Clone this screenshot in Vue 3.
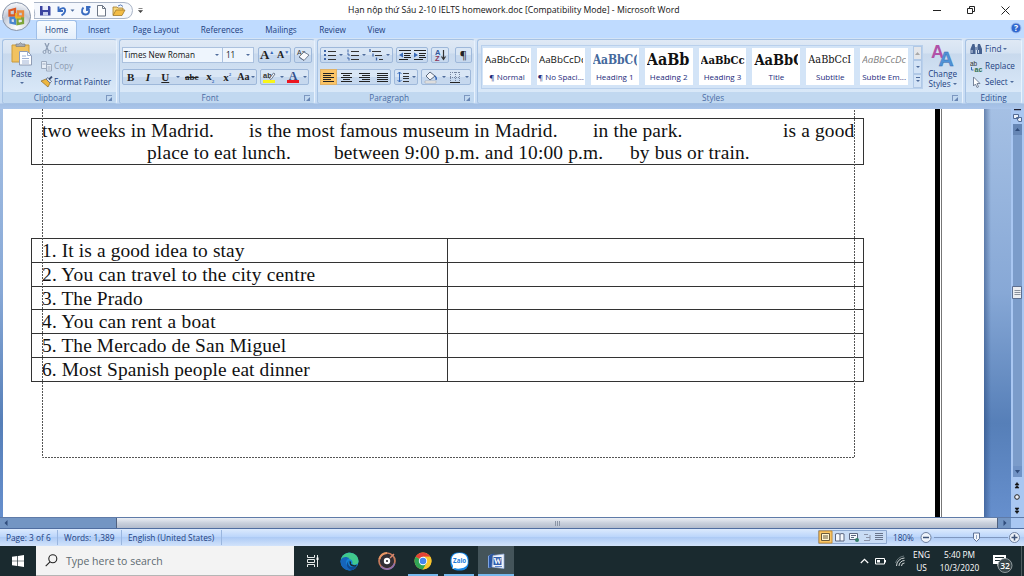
<script setup>
import { ref } from 'vue';

const tabs = ['Home', 'Insert', 'Page Layout', 'References', 'Mailings', 'Review', 'View'];
const activeTab = ref('Home');

const styles = [
  { sample: 'AaBbCcDc', name: '¶ Normal', cls: 'sans' },
  { sample: 'AaBbCcDc', name: '¶ No Spaci...', cls: 'sans' },
  { sample: 'AaBbC(', name: 'Heading 1', cls: 'h1' },
  { sample: 'AaBb', name: 'Heading 2', cls: 'h2' },
  { sample: 'AaBbCc', name: 'Heading 3', cls: 'h3' },
  { sample: 'AaBbC', name: 'Title', cls: 'title' },
  { sample: 'AaBbCcI', name: 'Subtitle', cls: 'subtitle' },
  { sample: 'AaBbCcDc', name: 'Subtle Em...', cls: 'subtle' }
];

const questions = [
  '1. It is a good idea to stay',
  '2. You can travel to the city centre',
  '3. The Prado',
  '4. You can rent a boat',
  '5. The Mercado de San Miguel',
  '6. Most Spanish people eat dinner'
];

// line bars for the alignment buttons, as [x, y, width]
const aligns = {
  left: [[2, 2, 11], [2, 4, 8], [2, 6, 11], [2, 8, 8], [2, 10, 11]],
  center: [[2, 2, 11], [4, 4, 7], [2, 6, 11], [4, 8, 7], [2, 10, 11]],
  right: [[2, 2, 11], [5, 4, 8], [2, 6, 11], [5, 8, 8], [2, 10, 11]],
  justify: [[2, 2, 11], [2, 4, 11], [2, 6, 11], [2, 8, 11], [2, 10, 11]]
};
</script>

<template>
  <div class="window">
    <header class="titlebar">
      <div class="qat">
        <svg width="116" height="19" viewBox="34 0 116 19">
          <path d="M31 1.500H124Q132 2 132.500 9.500Q132 17.500 124 17.500H34Q37 8 28 1.500" fill="#f5f8fd" stroke="#a9b4c6" />
          <path d="M40 5h9.500l1 1v8.500H40z" fill="#3b44a0" />
          <path d="M42.500 5h5.500v4h-5.500z" fill="#e8ecfa" />
          <path d="M43 11h5v3.500h-5z" fill="#c7d0ee" />
          <path d="M58.500 5.500v4.500h4.500M59 9.500c3-4 7-2.500 6 1c-.5 2-2 3-3.500 3.800" fill="none" stroke="#3a6cc0" stroke-width="1.900" />
          <path d="M70.500 8.500h4l-2 2.200z" fill="#4a6a9c" />
          <path d="M83.500 6.500c-3 3-1.500 7 1.800 7c4 0 5-4.500 2.500-7M87 10V6h3.500" fill="none" stroke="#3a6cc0" stroke-width="1.900" />
          <path d="M97.500 4.500h5l3 3v7.500h-8z" fill="#fff" stroke="#6d7786" />
          <path d="M102.500 4.500v3h3" fill="none" stroke="#6d7786" />
          <path d="M113 14V6h4l1 1h5v3" fill="#f7d77c" stroke="#a17a2b" stroke-width=".8" />
          <path d="M113 14.500l3-5.500h9l-3 5.500z" fill="#f3bc45" stroke="#a17a2b" stroke-width=".8" />
          <path d="M118 5q3-2.500 5 .5" fill="none" stroke="#5d7fb8" />
          <path d="M138.500 7.500h4M138.500 9.500h4l-2 2.200z" fill="#444" stroke="#555" stroke-width=".7" />
        </svg>
      </div>
      <div class="caption">Hạn nộp thứ Sáu 2-10 IELTS homework.doc [Compatibility Mode] - Microsoft Word</div>
      <svg class="controls" width="90" height="19" viewBox="0 0 90 19">
        <path d="M0 9.500h8" stroke="#222" />
        <path d="M34.500 7.500h5v5h-5zM36.500 7v-1.500h5v5h-1.500" fill="none" stroke="#222" />
        <path d="M68.500 5.500l8 8M76.500 5.500l-8 8" stroke="#222" />
      </svg>
    </header>

    <nav class="tabs">
      <button v-for="t in tabs" :key="t" :class="['tab', t.toLowerCase().replace(' ', '-'), { active: t === activeTab }]" @click="activeTab = t">{{ t }}</button>
      <svg class="help" width="12" height="12" viewBox="0 0 12 12">
        <circle cx="6" cy="6" r="5" fill="#2f67cf" stroke="#a5c0ee" />
        <text x="6" y="9" text-anchor="middle" font-family="Open Sans, sans-serif" font-size="8.500" font-weight="700" fill="#fff">?</text>
      </svg>
    </nav>

    <!-- office button sits over title bar and tabs -->
    <svg class="orb" width="32" height="32" viewBox="0 0 32 32">
      <defs>
        <radialGradient id="orb" cx=".5" cy=".9" r=".9">
          <stop offset="0" stop-color="#fff" />
          <stop offset=".45" stop-color="#d6dbe5" />
          <stop offset=".6" stop-color="#bfc7d5" />
          <stop offset="1" stop-color="#fbfcfe" />
        </radialGradient>
      </defs>
      <circle cx="16.500" cy="16.500" r="14" fill="url(#orb)" stroke="#8793a8" />
      <g fill="none" stroke-width="2.300">
        <path d="M9.500 10.500l5.500-1.500v6.500h-5.500z" stroke="#dc5a24" />
        <path d="M18 11.500h5v5h-5z" stroke="#e98a3a" />
        <path d="M17.500 18.500h5.500v4.500l-5.500 1z" stroke="#7da53a" />
        <path d="M10.500 18h4.500v5.500l-4.500-1z" stroke="#4a86ce" />
      </g>
      <path d="M16 13v4.500h5" fill="none" stroke="#f0b428" stroke-width="1.800" />
    </svg>

    <section class="ribbon">
      <div class="group clipboard">
        <div class="body">
          <div class="paste">
            <svg width="22" height="24" viewBox="0 0 22 24">
              <path d="M1 3h17v17H1z" fill="#f1c25f" stroke="#c99a3c" />
              <path d="M5 4.500V2h3l1.500-1.500L11 2h3v2.500z" fill="#a7acb5" stroke="#777" stroke-width=".6" />
              <path d="M8.500 9.500h8l4 4v9.500h-12z" fill="#fdfeff" stroke="#8f9cb4" />
              <path d="M16.500 9.500v4h4M11 14h4M11 16.500h7M11 19h7M11 21h7" stroke="#9fb2d4" fill="none" />
            </svg>
            <span>Paste</span>
            <i class="caret"></i>
          </div>
          <div class="clip-list">
            <div class="off">
              <svg width="14" height="12" viewBox="0 0 14 12"><path d="M5 0l3.500 8M9 0L5.500 8" stroke="#8d9db4" stroke-width="1.300" /><circle cx="4.500" cy="9" r="1.500" fill="none" stroke="#8d9db4" /><circle cx="9.500" cy="9" r="1.500" fill="none" stroke="#8d9db4" /></svg>Cut
            </div>
            <div class="off">
              <svg width="14" height="12" viewBox="0 0 14 12"><path d="M1.500 1.500h5v7h-5zM6.500 4.500h5v6.500h-5z" fill="#e6edf6" stroke="#9dabbf" /><path d="M7.500 7h3M7.500 9h3M2.500 4h3" stroke="#9dabbf" /></svg>Copy
            </div>
            <div>
              <svg width="14" height="12" viewBox="0 0 14 12"><path d="M1 5l5-2 4 4-2 4z" fill="#edb63e" stroke="#8a6a2c" stroke-width=".7" /><path d="M6 3l2-1.500 3.500 4L10 7z" fill="#dce5f3" stroke="#4a5a78" stroke-width=".7" /><path d="M9 3.500l3-3" stroke="#3d5277" stroke-width="1.800" /></svg>Format Painter
            </div>
          </div>
        </div>
        <div class="label">Clipboard<i class="launcher"></i></div>
      </div>

      <div class="group font">
        <div class="body">
          <div class="row">
            <div class="combo family">Times New Roman<i class="caret"></i></div>
            <div class="combo size">11<i class="caret"></i></div>
            <div class="set grow">
              <span class="serif big">A<sup>▲</sup></span>
              <span class="serif small">A<sup>▼</sup></span>
            </div>
            <div class="set one">
              <svg width="16" height="14" viewBox="0 0 16 14"><text x="2" y="6.500" font-family="Liberation Sans, sans-serif" font-size="7" fill="#333">Aa</text><path d="M4 9l5-5 5 3-5 5.500z" fill="#f8f9fc" stroke="#69758a" stroke-width=".9" /><path d="M4 9l5 3.500" stroke="#69758a" /></svg>
            </div>
          </div>
          <div class="row">
            <div class="set formats">
              <span class="serif b">B</span>
              <span class="serif it">I</span>
              <span class="serif u">U</span>
              <i class="caret"></i>
              <span class="serif s">abc</span>
              <span class="serif x">x<sub>2</sub></span>
              <span class="serif x">x<sup>2</sup></span>
              <span class="serif aa">Aa</span>
              <i class="caret"></i>
            </div>
            <div class="set colors">
              <svg width="15" height="14" viewBox="0 0 15 14"><text x="1" y="7.500" font-family="Liberation Sans, sans-serif" font-size="7.500" font-weight="700" fill="#333">ab</text><path d="M7.500 8.500l4-5.500 1.500 1-4 5.500z" fill="#fff" stroke="#4d5b73" stroke-width=".8" /><path d="M1 10h12v3H1z" fill="#f8f519" /></svg>
              <i class="caret"></i>
              <svg width="14" height="14" viewBox="0 0 14 14"><text x="7" y="9.500" text-anchor="middle" font-family="Liberation Serif, serif" font-size="12" font-weight="700" fill="#33508c">A</text><path d="M1 10h12v3H1z" fill="#ec1620" /></svg>
              <i class="caret"></i>
            </div>
          </div>
        </div>
        <div class="label">Font<i class="launcher"></i></div>
      </div>

      <div class="group paragraph">
        <div class="body">
          <div class="row">
            <div class="set lists">
              <svg width="13" height="12" viewBox="0 0 13 12"><path d="M1 1h2v2H1zM1 5h2v2H1zM1 9h2v2H1z" fill="#3f66a8" /><path d="M5 2.500h8M5 6.500h8M5 10.500h8" stroke="#333" /></svg>
              <i class="caret"></i>
              <svg width="13" height="12" viewBox="0 0 13 12"><path d="M2 .5v3M1 5h2v2M1 9h2v2.500" stroke="#3f66a8" fill="none" /><path d="M5 2.500h8M5 6.500h8M5 10.500h8" stroke="#333" /></svg>
              <i class="caret"></i>
              <svg width="14" height="12" viewBox="0 0 14 12"><path d="M1 0v3M4 4.500v3M7.500 8.500v3" stroke="#3f66a8" stroke-width="1.300" /><path d="M3 2.500h9M6 6.500h7M10 10.500h4" stroke="#333" /></svg>
              <i class="caret"></i>
            </div>
            <div class="set indents">
              <svg width="13" height="12" viewBox="0 0 13 12"><path d="M1 1.500h12M6 4.500h7M6 6.500h6M6 8.500h7M1 10.500h9" stroke="#222" /><path d="M5 3.500v5L1 6z" fill="#3668b8" /></svg>
              <svg width="13" height="12" viewBox="0 0 13 12"><path d="M1 1.500h12M6 4.500h7M6 6.500h6M6 8.500h7M1 10.500h9" stroke="#222" /><path d="M1 3.500v5L5 6z" fill="#3668b8" /></svg>
            </div>
            <div class="set one">
              <svg width="15" height="14" viewBox="0 0 15 14"><text x="2" y="6.500" font-family="Liberation Sans, sans-serif" font-size="7.500" font-weight="700" fill="#31579c">A</text><text x="2" y="13" font-family="Liberation Sans, sans-serif" font-size="7.500" font-weight="700" fill="#8b3558">Z</text><path d="M10.500 2v9M8.500 8.500l2 3 2-3" stroke="#333" fill="none" stroke-width="1.200" /></svg>
            </div>
            <div class="set one pilcrow">¶</div>
          </div>
          <div class="row">
            <div class="set aligns">
              <span v-for="(bars, key) in aligns" :key="key" :class="{ pressed: key === 'left' }">
                <svg width="15" height="13" viewBox="0 0 15 13"><rect v-for="(b, i) in bars" :key="i" :x="b[0]" :y="b[1]" :width="b[2]" height="1" fill="#222" /></svg>
              </span>
            </div>
            <div class="set spacing">
              <svg width="12" height="12" viewBox="0 0 12 12"><path d="M2.500 1v10M.5 3l2-2 2 2M.5 9l2 2 2-2" stroke="#3668b8" fill="none" /><path d="M6 2.500h6M6 5.500h6M6 7.500h6M6 10.500h6" stroke="#333" /></svg>
              <i class="caret"></i>
            </div>
            <div class="set fills">
              <svg width="14" height="13" viewBox="0 0 14 13"><path d="M2 5l4-4 5 4-5 4z" fill="#f4f6fa" stroke="#5d6b80" /><path d="M11 5q2 2 1 4" stroke="#3668b8" fill="none" stroke-width="1.500" /><path d="M1 10h11v2H1z" fill="#f3f3f3" stroke="#999" stroke-width=".5" /></svg>
              <i class="caret"></i>
              <svg width="12" height="12" viewBox="0 0 12 12"><path d="M1.500 1v10M6.500 1v10M10.500 1v10M1 1.500h10M1 6.500h10" stroke="#7786a0" stroke-dasharray="1 1" /><path d="M1 11.500h10" stroke="#222" /></svg>
              <i class="caret"></i>
            </div>
          </div>
        </div>
        <div class="label">Paragraph<i class="launcher"></i></div>
      </div>

      <div class="group styles">
        <div class="body">
          <div class="gallery">
            <div v-for="s in styles" :key="s.name" class="style">
              <div :class="['sample', s.cls]">{{ s.sample }}</div>
              <div class="style-name">{{ s.name }}</div>
            </div>
            <div class="gallery-nav">
              <span class="dim"><svg width="5" height="3" viewBox="0 0 5 3"><path d="M0 3h5L2.500 0z" fill="#a8a8a8" /></svg></span>
              <span><i class="caret"></i></span>
              <span class="more"><i class="caret"></i></span>
            </div>
          </div>
          <div class="change">
            <svg width="24" height="24" viewBox="0 0 24 24">
              <text x="0" y="14.500" font-family="Liberation Sans, sans-serif" font-size="18" font-weight="700" fill="#b152a8">A</text>
              <text x="7.500" y="22.500" font-family="Liberation Sans, sans-serif" font-size="21" font-weight="700" fill="#4f93d8" stroke="#3467ac" stroke-width=".4">A</text>
            </svg>
            <span>Change</span>
            <span>Styles <i class="caret"></i></span>
          </div>
        </div>
        <div class="label">Styles<i class="launcher"></i></div>
      </div>

      <div class="group editing">
        <div class="body">
          <div>
            <svg width="13" height="12" viewBox="0 0 13 12"><path d="M2.500 1h2l1 5v5h-5V6zM8 1h2l2 5v5H7V6z" fill="#46618f" /><path d="M5 4h3v3H5z" fill="#8095b8" /><path d="M2 7v3M8.500 7v3" stroke="#cbd7ec" /></svg>Find <i class="caret"></i>
          </div>
          <div>
            <svg width="13" height="12" viewBox="0 0 13 12"><text x="0" y="6" font-family="Liberation Sans, sans-serif" font-size="6.500" fill="#333">ab</text><text x="4.500" y="12" font-family="Liberation Sans, sans-serif" font-size="7" font-weight="700" fill="#2f6f4b">ac</text><path d="M1.500 7v3h2" stroke="#3668b8" fill="none" /></svg>Replace
          </div>
          <div>
            <svg width="13" height="12" viewBox="0 0 13 12"><path d="M3.500 1v9l2-2 1.500 3.500 1.500-.7L7 7.500h3z" fill="#fff" stroke="#6b7890" stroke-width=".9" /></svg>Select <i class="caret"></i>
          </div>
        </div>
        <div class="label">Editing</div>
      </div>
    </section>

    <main class="workspace">
      <div class="canvas">
        <div class="page">
          <div class="word-bank">
            <div class="line first">
              <span>two weeks in Madrid.</span>
              <span>is the most famous museum in Madrid.</span>
              <span>in the park.</span>
              <span>is a good</span>
            </div>
            <div class="line second">
              <span>place to eat lunch.</span>
              <span>between 9:00 p.m. and 10:00 p.m.</span>
              <span>by bus or train.</span>
            </div>
          </div>
          <div class="answers">
            <div v-for="q in questions" :key="q" class="answer">
              <div>{{ q }}</div>
              <div></div>
            </div>
          </div>
          <!-- text boundary guides -->
          <svg class="bounds" width="814" height="349" viewBox="0 0 814 349">
            <path d="M.5 0v348.500h812V0" fill="none" stroke="#555" stroke-dasharray="2 1" />
          </svg>
        </div>
        <div class="rule"></div>
        <div class="next-page"></div>
        <div class="desk"></div>
      </div>
      <aside class="vscroll">
        <svg width="13" height="408" viewBox="0 0 13 408">
          <path d="M3 .5h7" stroke="#223" stroke-width="1.500" />
          <path d="M2.500 5.500h5v4h-5zM5.500 8.500h5v4h-3z" fill="#edf3fb" stroke="#516a94" />
          <path d="M2 15h9v353H2z" fill="#7b9cca" />
          <path d="M2 15h9v11H2z" fill="#6686b5" />
          <path d="M4 22h5l-2.500-3z" fill="#304d7c" />
          <path d="M1.500 177.500h9v12h-9z" fill="#eceef2" stroke="#5d6f90" />
          <path d="M3.500 181.500h6M3.500 183.500h6M3.500 185.500h6" stroke="#8a919c" />
          <path d="M2 357h9v11H2z" fill="#7193c5" />
          <path d="M4 361h5l-2.500 3.500z" fill="#304d7c" />
          <path d="M4 376h4l-2-2.500zM4 379h4l-2-2.500z" fill="#111" stroke="#111" stroke-width=".6" />
          <circle cx="6" cy="388" r="2.300" fill="#e9effa" stroke="#222" />
          <path d="M4 399h4l-2 2.500zM4 402h4l-2 2.500z" fill="#111" stroke="#111" stroke-width=".6" />
        </svg>
      </aside>
    </main>

    <div class="hscroll">
      <span class="arrow"><svg width="4" height="6" viewBox="0 0 4 6"><path d="M3.500 0v6L.5 3z" fill="#304d7c" /></svg></span>
      <span class="track"></span>
      <span class="thumb"><svg width="5" height="5" viewBox="0 0 5 5"><path d="M.5 0v5M2.500 0v5M4.500 0v5" stroke="#8b95a5" /></svg></span>
      <span class="arrow end"><svg width="4" height="6" viewBox="0 0 4 6"><path d="M.5 0v6l3-3z" fill="#304d7c" /></svg></span>
      <span class="corner"></span>
    </div>

    <footer class="status">
      <span class="cell pages">Page: 3 of 6</span>
      <span class="cell words">Words: 1,389</span>
      <span class="cell lang">English (United States)</span>
      <svg class="views" width="70" height="15" viewBox="0 0 70 15">
        <path d="M.5.500h68v13H.5z" fill="#c9dcf5" stroke="#8ea9d0" />
        <path d="M1 1h13v12H1z" fill="#fbc765" stroke="#c28b37" />
        <path d="M3.500 3.500h8v7h-8zM5 6h5M5 8h5" fill="#fff4cf" stroke="#6b5a38" />
        <path d="M17.500 4q2-1 4.500 0q2-1 4 0v7h-8.500zM22 4v7" fill="#f6f9fd" stroke="#5d6780" />
        <path d="M31.500 3.500h8v6h-8zM33 5.500h5M33 7.500h3" fill="#f6f9fd" stroke="#5d6780" />
        <circle cx="39" cy="10" r="2" fill="#358069" />
        <path d="M46 4.500h4M48 7.500h4M46 10.500h6M52 5v5" stroke="#8a93a8" fill="none" />
        <path d="M57 3.500h8M57 5.500h8M57 7.500h8M57 9.500h8" stroke="#68748b" />
      </svg>
      <span class="zoom">180%</span>
      <svg class="slider" width="104" height="17" viewBox="0 0 104 17">
        <circle cx="8" cy="8.500" r="5" fill="#eef3fa" stroke="#6f81a0" />
        <path d="M5 8.500h6" stroke="#3e5377" stroke-width="1.500" />
        <path d="M16 8.500h74" stroke="#7f97bf" />
        <path d="M55.500 4h6v5.500l-3 3-3-3z" fill="#f4f7fc" stroke="#5f7397" />
        <path d="M58.500 6v4" stroke="#8fa1c0" />
        <circle cx="96.500" cy="8.500" r="5" fill="#eef3fa" stroke="#6f81a0" />
        <path d="M93.500 8.500h6M96.500 5.500v6" stroke="#3e5377" stroke-width="1.500" />
      </svg>
    </footer>

    <footer class="taskbar">
      <div class="start">
        <svg width="12" height="12" viewBox="0 0 12 12"><path d="M0 1.700L5.300 1v4.700H0zM6 .9L12 0v5.700H6zM0 6.300h5.300V11L0 10.300zM6 6.300h6V12l-6-.9z" fill="#fff" /></svg>
      </div>
      <div class="search">
        <svg width="13" height="13" viewBox="0 0 13 13"><circle cx="7.800" cy="4.800" r="4" fill="none" stroke="#222" stroke-width="1.100" /><path d="M5 7.800L.7 12.200" stroke="#222" stroke-width="1.100" /></svg>
        <span>Type here to search</span>
      </div>
      <div class="app taskview">
        <svg width="14" height="12" viewBox="0 0 14 12"><path d="M1.500 0v2.500h7V0M1.500 12V9.500h7V12M1.500 4.500h7v3h-7zM11.500 0v12" fill="none" stroke="#e6eaea" /><path d="M10.500 2.500h2v2.500h-2z" fill="#fff" /></svg>
      </div>
      <div class="app">
        <svg width="19" height="19" viewBox="0 0 19 19">
          <circle cx="9.500" cy="9.500" r="9" fill="#1683d8" />
          <path d="M.8 8C2 1 9-.5 13.500 1.500S19 8 18.300 10.500c-.8 2.500-4.500 2.700-6.300 1.500c1-1 .8-4-2-4.800C6 6 2 6 .8 8z" fill="#41c98c" />
          <path d="M.6 8.500C2.500 4 7 4.500 9.500 6.500C5.500 7 5 12 8 14.500s6 2.200 8 1.500C11 21 0 18 .6 8.500z" fill="#1665bb" />
          <path d="M9 8.500c-2 2.500-.5 6 3 6.500c2.500.3 4-.3 5-1c-1 2-3 3.500-5 4c-5-1-7-6-3-9.500z" fill="#0f4a91" />
          <path d="M9.700 8.500q2.300 1.500 1.300 3.500q3 2 6 .5l-1 2q-8 1-6.300-6z" fill="#1a2a2f" />
        </svg>
      </div>
      <div class="app">
        <svg width="20" height="20" viewBox="0 0 20 20"><circle cx="10" cy="10" r="8" fill="#322f35" stroke="#c67a5c" stroke-width="1.700" /><path d="M10 2a8 8 0 0 0-7.500 6" stroke="#e89866" stroke-width="1.800" fill="none" /><path d="M4 15.500a8 8 0 0 0 13.500-3" stroke="#8c6fae" stroke-width="1.700" fill="none" /><path d="M13 7l4-4" stroke="#d98970" stroke-width="1.500" /><circle cx="10" cy="10" r="3.200" fill="#fff" /><circle cx="10" cy="10" r="1.100" fill="#322f35" /></svg>
      </div>
      <div class="app open chrome">
        <svg width="18" height="18" viewBox="0 0 18 18"><circle cx="9" cy="9" r="8.500" fill="#f9c52d" /><path d="M9 9L1.640 4.750A8.500 8.500 0 0 1 16.360 4.750H9z" fill="#e44236" /><path d="M9 9L1.640 4.750A8.500 8.500 0 0 0 9 17.500L12.700 11.100z" fill="#31a455" /><path d="M9 4.750h7.360A8.500 8.500 0 0 1 9 17.500l3.700-6.400z" fill="#f9c52d" /><circle cx="9" cy="9" r="4.200" fill="#fff" /><circle cx="9" cy="9" r="3.300" fill="#4586ee" /></svg>
      </div>
      <div class="app open zalo">
        <svg width="19" height="19" viewBox="0 0 19 19"><rect x=".5" y=".5" width="18" height="18" rx="7" fill="#1687e8" /><path d="M1.500 8Q2 1 9.500 1T17.800 8.500T10 16.500Q7 17 5 16l-2.500 1l.6-3Q1 11 1.500 8z" fill="#fff" /><text x="9.600" y="11" text-anchor="middle" font-family="Open Sans, sans-serif" font-size="6.200" font-weight="700" fill="#1678d8">Zalo</text></svg>
      </div>
      <div class="app open word">
        <svg width="18" height="17" viewBox="0 0 18 17"><path d="M1 3l4-2v13l-4 1z" fill="#7ea5e2" /><path d="M2 3q2-3 6-2.500l-3 2.500v11.500H2z" fill="#2855a4" /><path d="M6 2.500l11-1.500v14.500L5 14z" fill="#eef3fb" stroke="#8faadb" stroke-width=".7" /><path d="M6.500 4h8v8h-8z" fill="#315eae" /><text x="10.500" y="11" text-anchor="middle" font-family="Liberation Serif, serif" font-size="8" font-weight="700" fill="#fff">W</text><path d="M8 13.500h7" stroke="#638ad0" /></svg>
      </div>
      <div class="tray">
        <svg width="46" height="14" viewBox="0 0 46 14">
          <path d="M.8 9l3.700-3.700L8.200 9" fill="none" stroke="#fff" stroke-width="1.200" />
          <path d="M15.500 4.500h9v5.500h-9z" fill="none" stroke="#fff" /><path d="M17 6h3v2.500h-3zM25 6h1v2.500h-1z" fill="#fff" />
          <path d="M36.500 12a8 8 0 0 1 8-8M39 12a5.500 5.500 0 0 1 5.500-5.500M41.500 12a3 3 0 0 1 3-3" fill="none" stroke="#e2e6e6" stroke-width=".9" /><path d="M35.500 9a10.500 10.500 0 0 1 8.500-7" fill="none" stroke="#78868a" stroke-width=".8" />
        </svg>
        <div class="stack lang-ind"><span>ENG</span><span>US</span></div>
        <div class="stack clock"><span>5:40 PM</span><span>10/3/2020</span></div>
        <svg class="notif" width="22" height="20" viewBox="0 0 22 20">
          <path d="M0 2h13v9H7l-2.500 2.500V11H0z" fill="#fff" /><path d="M2 4.500h9M2 7.500h7" stroke="#1b2c31" />
          <circle cx="12" cy="12.500" r="7" fill="#38464a" stroke="#aab3b5" stroke-width=".8" />
          <text x="12" y="15.500" text-anchor="middle" font-family="Open Sans, sans-serif" font-size="8.500" font-weight="600" fill="#fff">32</text>
        </svg>
      </div>
    </footer>
  </div>
</template>

<style>
body {
  margin: 0;
  overflow: hidden;
}
</style>

<style scoped>
.window {
  position: relative;
  width: 1024px;
  height: 576px;
  display: flex;
  flex-direction: column;
  overflow: hidden;
  background: #fff;
  font-family: "Open Sans", "Noto Sans", sans-serif;
  font-size: 8.2px;
  line-height: 10px;
  white-space: nowrap;
  color: #1d3f82;
}

.window * {
  box-sizing: border-box;
}

svg {
  display: block;
  flex: none;
}

.titlebar {
  height: 20px;
  display: flex;
  align-items: center;
}

.qat {
  padding-left: 34px;
  width: 348px;
}

.caption {
  flex: 1;
  font-size: 8.7px;
  color: #111;
}

.controls {
  margin-right: 1px;
}

.tabs {
  height: 18px;
  background: #bfdbff;
  display: flex;
  align-items: flex-start;
  padding-left: 36px;
}

.tab {
  height: 19px;
  padding: 0;
  border: 0;
  background: none;
  font: inherit;
  color: #22407e;
  width: 50px;
  position: relative;
}

.tab.active {
  width: 41px;
  margin-right: -3px;
  background: linear-gradient(#f7fbff, #e3eefb);
  border: 1px solid #9fbfe8;
  border-bottom: 0;
  border-radius: 3px 3px 0 0;
}

.tab.page-layout { width: 64px; }
.tab.references { width: 68px; }
.tab.mailings { width: 50px; }
.tab.review { width: 53px; }
.tab.view { width: 35px; }

.help {
  margin: 2px 2px 0 auto;
}

.orb {
  position: absolute;
  left: 0;
  top: 0;
}

.ribbon {
  height: 71px;
  padding: 1px 2px 5px;
  display: flex;
  gap: 2px;
  background: linear-gradient(#d5e4f6 0, #c7dcf4 65px, #a3bfe4 66px, #aac5ea 100%);
}

.group {
  display: flex;
  flex-direction: column;
  border: 1px solid #a6c2e4;
  border-right-color: #e8f2fd;
  border-radius: 3px;
  background: linear-gradient(#dfe9f5 0, #d5e2f2 13px, #c8d9ed 14px, #d9e8f8 52px);
  overflow: hidden;
}

.clipboard { width: 115px; }
.font { width: 197px; }
.paragraph { width: 158px; }
.styles { width: 487px; }
.editing { width: 57px; }

.body {
  height: 52px;
  flex: none;
}

.label {
  flex: 1;
  display: flex;
  justify-content: center;
  align-items: center;
  padding-right: 14px;
  background: #c1d8f0;
  color: #4a6ca5;
  position: relative;
}

.launcher {
  position: absolute;
  right: 4px;
  top: 3px;
  width: 6px;
  height: 6px;
  border-top: 1px solid #7c97c0;
  border-left: 1px solid #7c97c0;
}

.launcher::after {
  content: "";
  position: absolute;
  right: 0;
  bottom: 0;
  border-left: 4px solid transparent;
  border-bottom: 4px solid #6886b4;
}

.caret {
  display: inline-block;
  flex: none;
  border: 2px solid transparent;
  border-top-color: #4f6c9c;
  border-bottom: 0;
}

.clipboard .body {
  display: flex;
}

.paste {
  width: 37px;
  padding-top: 2px;
  display: flex;
  flex-direction: column;
  align-items: center;
}

.paste span {
  margin: 3px 0 3px;
}

.clip-list {
  padding-top: 1px;
}

.clip-list div {
  height: 16.5px;
  display: flex;
  align-items: center;
}

.clip-list .off {
  color: #8e9cb1;
}

.font .body,
.paragraph .body {
  padding: 7px 2px 0;
  display: flex;
  flex-direction: column;
  gap: 6px;
}

.row {
  height: 16px;
  display: flex;
  gap: 3px;
}

.combo {
  display: flex;
  align-items: center;
  justify-content: space-between;
  padding: 0 3px 0 1px;
  background: #eef5fd;
  border: 1px solid #abc1de;
  color: #111;
}

.family { width: 102px; }
.size { width: 32px; margin-left: -4px; padding-left: 3px; }

.set {
  display: flex;
  align-items: center;
  justify-content: space-around;
  border: 1px solid #9eb8da;
  border-radius: 2px;
  background: linear-gradient(#d9e6f5 50%, #c6d8ee 50%);
}

.formats {
  display: grid;
  grid-template-columns: 16px 18px 17px 8px 20px 17px 17px 15px 5px;
  justify-content: start;
  justify-items: center;
  width: 135px;
}

.grow { width: 34px; margin-left: 1px; }
.one { width: 18px; }
.one + .one { margin-left: 3px; }
.colors { width: 49px; }
.lists { width: 75px; }
.indents { width: 34px; }
.aligns { width: 71px; }
.spacing { width: 24px; }
.fills { width: 50px; }

.serif {
  font-family: "Liberation Serif", serif;
  font-weight: 700;
  color: #222;
  font-size: 11px;
}

.big { font-size: 13px; }
.small { font-size: 10px; }

.serif sup,
.serif sub {
  font-size: 5px;
  line-height: 0;
  color: #3668b8;
}

.it { font-style: italic; }
.u { text-decoration: underline; }
.s { font-size: 9px; text-decoration: line-through; }
.aa { font-size: 10px; }

.pilcrow {
  color: #222;
  font-size: 11px;
}

.aligns {
  justify-content: space-between;
}

.aligns span {
  height: 14px;
  display: flex;
  align-items: center;
}

.aligns .pressed {
  background: #fbc465;
  outline: 1px solid #e0b268;
}

.styles .body {
  display: flex;
  padding: 5px 0 0 3px;
}

.gallery {
  width: 442px;
  height: 44px;
  display: flex;
  padding: 1px 0 1px 1px;
  gap: 6px;
  background: #d3e4f7;
  border: 1px solid #b9d0ec;
}

.style {
  width: 48px;
  height: 37px;
  margin-top: 1px;
  background: #fff;
  overflow: hidden;
}

.sample {
  height: 25px;
  width: 44px;
  margin-left: 2px;
  line-height: 24px;
  overflow: hidden;
  color: #111;
  font-family: "DejaVu Serif Condensed", "DejaVu Serif", serif;
}

.sample.sans,
.sample.subtle {
  font-family: "Open Sans", sans-serif;
  font-size: 9.8px;
}

.sample.h1 { font-size: 12px; font-weight: 700; color: #44699c; letter-spacing: -.1px; }
.sample.h2 { font-size: 16px; font-weight: 700; }
.sample.h3 { font-size: 11.2px; font-weight: 700; }
.sample.title { font-size: 14.5px; font-weight: 700; }
.sample.subtitle { font-size: 10.8px; }
.sample.subtle { font-style: italic; color: #808080; }

.style-name {
  margin-top: -1px;
  text-align: center;
  font-size: 8px;
  color: #22297a;
}

.gallery-nav {
  width: 9px;
  margin: -1px 0 -1px -1px;
  display: flex;
  flex-direction: column;
}

.gallery-nav span {
  flex: 1;
  display: flex;
  align-items: center;
  justify-content: center;
  border: 1px solid #b0c8e6;
  background: #d3e3f6;
}

.gallery-nav .dim {
  background: #e4e6ea;
}

.more .caret {
  position: relative;
}

.more .caret::before {
  content: "";
  position: absolute;
  left: -2px;
  top: -5px;
  width: 4px;
  height: 1px;
  background: #4f6c9c;
}

.change {
  flex: 1;
  display: flex;
  flex-direction: column;
  align-items: center;
  margin-top: -2px;
}

.change span:first-of-type {
  margin-top: 2px;
}

.change .caret,
.editing .caret {
  vertical-align: 2px;
}

.editing .body {
  padding: 1px 0 0 4px;
}

.editing .body div {
  height: 16.5px;
  display: flex;
  align-items: center;
  gap: 2px;
}

.editing .label {
  padding-right: 0;
  color: #2d5090;
}

.workspace {
  height: 408px;
  display: flex;
}

.canvas {
  flex: 1;
  display: flex;
  padding-left: 3px;
  background: linear-gradient(#a5c0e4, #87a8d6 45%, #567fb8 77%, #668fcd);
}

.page {
  position: relative;
  width: 932px;
  padding: 9px 0 0 28px;
  background: #fff;
  font-family: "Liberation Serif", serif;
  font-size: 19.4px;
  color: #111;
}

.word-bank {
  width: 833px;
  height: 47px;
  border: 1px solid #333;
  padding: 1px 0 0 10px;
  letter-spacing: .15px;
}

.line {
  display: grid;
  line-height: 22.5px;
}

.line.first {
  grid-template-columns: 207px 344px 190px auto;
}

.line.second {
  margin-top: -1px;
  padding-left: 105px;
  grid-template-columns: 187px 296px auto;
}

.answers {
  margin-top: 73px;
  width: 833px;
  border: 1px solid #333;
  letter-spacing: .12px;
}

.answer {
  display: grid;
  grid-template-columns: 415px 1fr;
  line-height: 24.8px;
}

.answer:nth-child(2) {
  letter-spacing: .22px;
}

.answer:nth-child(4) {
  letter-spacing: .24px;
}

.answer + .answer {
  border-top: 1px solid #333;
}

.answer > div {
  height: 22.8px;
  padding-left: 10px;
}

.answer > div + div {
  border-left: 1px solid #333;
}

.bounds {
  position: absolute;
  left: 39px;
  top: 0;
}

.rule {
  width: 5px;
  background: #000;
}

.next-page {
  width: 44px;
  background: #fff;
  border-left: 1px solid #fff;
  box-shadow: inset 1px 0 #777;
}

.desk {
  flex: 1;
  background: linear-gradient(90deg, rgba(40, 70, 120, .5), transparent 7px);
}

.vscroll {
  width: 13px;
  background: #a9c7f2;
}

.hscroll {
  height: 12px;
  display: flex;
  background: #7395c3;
  border-top: 1px solid #5f7ba8;
  border-bottom: 1px solid #4f6da0;
}

.arrow {
  width: 11px;
  display: flex;
  align-items: center;
  justify-content: center;
}

.track {
  width: 105px;
}

.thumb {
  width: 882px;
  display: flex;
  align-items: center;
  justify-content: center;
  background: linear-gradient(#eceff5, #c9d0dc 50%, #b3bccd);
  border-left: 1px solid #50617f;
  border-right: 1px solid #50617f;
}

.end {
  width: 13px;
}

.corner {
  flex: 1;
  background: #a9c7f2;
}

.status {
  height: 17px;
  display: flex;
  align-items: center;
  background: linear-gradient(#dceafd, #bcd6fb 45%, #aecbf5 50%, #d2e3fb);
}

.cell {
  height: 15px;
  line-height: 15px;
  border-right: 1px solid #9ab6df;
  padding-left: 6px;
  font-size: 8.3px;
}

.pages { width: 58px; }
.words { width: 64px; }
.lang { width: 100px; }

.views {
  margin-left: auto;
}

.zoom {
  width: 30px;
  padding-left: 5px;
}

.slider {
  margin-right: 2px;
}

.taskbar {
  height: 30px;
  display: flex;
  background: #1a2a2f;
  color: #fff;
}

.start {
  width: 36px;
  display: flex;
  align-items: center;
  justify-content: center;
}

.search {
  width: 258px;
  display: flex;
  align-items: center;
  gap: 8px;
  padding-left: 9px;
  background: #f3f3f3;
  border-bottom: 1px solid #b5b5b5;
  font-size: 10.5px;
  color: #5d6a70;
}

.app {
  width: 37px;
  display: flex;
  align-items: center;
  justify-content: center;
}

.open {
  box-shadow: inset 0 -2px #76b9ed;
}

.chrome {
  width: 30px;
  margin: 0 6px 0 3px;
}

.zalo {
  width: 30px;
  margin-right: 4px;
}

.word {
  width: 36px;
  background: #44545a;
}

.tray {
  margin-left: auto;
  display: flex;
  align-items: center;
  border-right: 1px solid #4e5b5f;
  margin-right: 2px;
}

.stack {
  display: flex;
  flex-direction: column;
  align-items: center;
  line-height: 13px;
  font-size: 8.3px;
}

.lang-ind {
  width: 31px;
}

.clock {
  width: 45px;
}

.notif {
  margin: 3px 6px 0 11px;
}
</style>
